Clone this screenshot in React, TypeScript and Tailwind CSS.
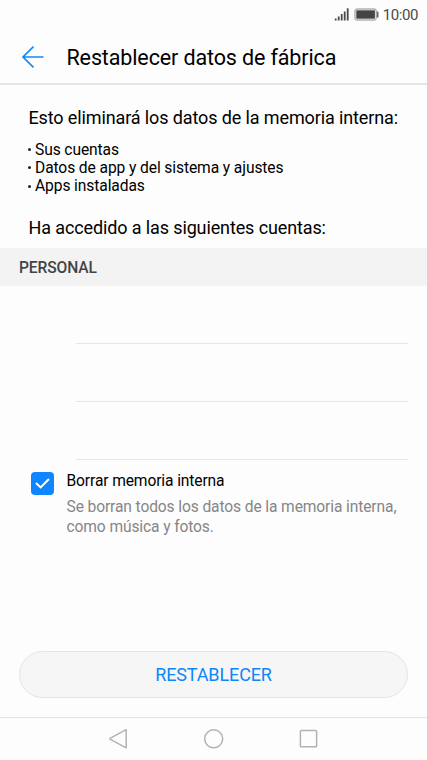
const deletedItems = [
  "Sus cuentas",
  "Datos de app y del sistema y ajustes",
  "Apps instaladas",
];

const accounts = ["account-1", "account-2", "account-3"];

function StatusBar() {
  return (
    <div className="flex h-[30px] items-center justify-end pr-[9px]">
      <svg width="15" height="14" viewBox="0 0 15 14" fill="#4a4a48">
        <rect x="0.8" y="10.5" width="1.8" height="2" />
        <rect x="3.8" y="8.5" width="1.8" height="4" />
        <rect x="6.8" y="6" width="1.8" height="6.5" />
        <rect x="9.8" y="3.5" width="1.8" height="9" />
        <rect x="12.8" y="0.3" width="1.8" height="12.2" />
      </svg>
      <svg className="-mt-[2px] ml-[5px]" width="25" height="13" viewBox="0 0 25 13">
        <rect x="1" y="1" width="21.2" height="11" rx="1.5" fill="none" stroke="#8a8a88" strokeWidth="1" />
        <rect x="2.3" y="2.3" width="18.6" height="8.4" fill="#444442" />
        <rect x="22.9" y="3.5" width="1.6" height="6" rx="0.6" fill="#666664" />
      </svg>
      <span className="ml-[4px] pt-px text-[15px] leading-none tracking-[-0.4px] text-[#4a4a48]">10:00</span>
    </div>
  );
}

function Header() {
  return (
    <header className="flex h-[55px] items-center border-b-2 border-[#e4e4e4] pl-[22px]">
      <svg width="22" height="22" viewBox="0 0 22 22" fill="none" stroke="#1389f5" strokeWidth="1.6">
        <path d="M21.5 11H1M11.5 0.6L1 11l10.5 10.4" />
      </svg>
      <h1 className="ml-[22.5px] pt-[3px] text-[21.5px] leading-none tracking-[-0.13px] text-black">
        Restablecer datos de fábrica
      </h1>
    </header>
  );
}

function NavBar() {
  return (
    <nav className="flex h-[43px] items-center justify-center gap-[75px] border-t border-[#e4e4e4]">
      <svg width="20" height="20" viewBox="0 0 20 20" fill="none" stroke="#b2b2b2" strokeWidth="1.5">
        <path d="M17.2 0.6V18.8L1.4 10.3Q0.6 9.7 1.4 9.1Z" strokeLinejoin="round" />
      </svg>
      <svg width="20" height="20" viewBox="0 0 20 20" fill="none" stroke="#b2b2b2" strokeWidth="1.5">
        <circle cx="9.7" cy="9.8" r="9" />
      </svg>
      <svg width="20" height="20" viewBox="0 0 20 20" fill="none" stroke="#b2b2b2" strokeWidth="1.5">
        <rect x="1.4" y="1.6" width="16.2" height="16.2" rx="0.8" />
      </svg>
    </nav>
  );
}

export default function App() {
  return (
    <div className="flex h-[760px] w-[427px] flex-col overflow-hidden bg-[#fdfdfd] font-['Roboto',sans-serif]">
      <StatusBar />
      <Header />

      <main className="flex flex-1 flex-col">
        <section className="h-[163px] pt-[22px] text-black">
          <p className="pl-[28.5px] text-[18px] leading-[22px] tracking-[-0.12px]">
            Esto eliminará los datos de la memoria interna:
          </p>
          <ul className="mt-[12px] pl-[28px] text-[15.6px] leading-[18.2px] tracking-[-0.1px]">
            {deletedItems.map((item) => (
              <li key={item} className="flex items-center">
                <span className="mb-px mr-[4px] size-[3px] rounded-full bg-[#222]" />
                {item}
              </li>
            ))}
          </ul>
          <p className="mt-[21px] pl-[28.5px] text-[18px] leading-[22px] tracking-[-0.12px]">
            Ha accedido a las siguientes cuentas:
          </p>
        </section>

        <h2 className="flex h-[38px] items-center bg-[#f3f3f3] pl-[19px] pt-[3px] text-[15.6px] font-medium leading-none tracking-[-0.12px] text-[#444]">
          PERSONAL
        </h2>

        <div className="pl-[76px] pr-[19px]">
          {accounts.map((account) => (
            <div key={account} className="h-[58px] border-b border-[#e6e6e6]" />
          ))}
        </div>

        <label className="flex pl-[31px] pt-[11px]">
          <span className="mt-px flex size-[23px] shrink-0 items-center justify-center rounded-[4px] bg-[#0d86ff]">
            <svg width="15" height="11" viewBox="0 0 15 11" fill="none" stroke="#fff" strokeWidth="2">
              <path d="M1 5l4.6 4.4L14 1" />
            </svg>
          </span>
          <span className="ml-[12.5px]">
            <span className="block text-[15.6px] leading-[20px] tracking-[-0.12px] text-black">
              Borrar memoria interna
            </span>
            <span className="mt-[6px] block w-[345px] text-[15.6px] leading-[20px] tracking-[-0.12px] text-[#868686]">
              Se borran todos los datos de la memoria interna, como música y fotos.
            </span>
          </span>
        </label>

        <button className="mx-[19px] mb-[19px] mt-auto h-[47px] rounded-full border border-[#e4e4e4] bg-[#f6f6f6] text-[18px] leading-none tracking-[-0.12px] text-[#0d86f8]">
          RESTABLECER
        </button>
      </main>

      <NavBar />
    </div>
  );
}
